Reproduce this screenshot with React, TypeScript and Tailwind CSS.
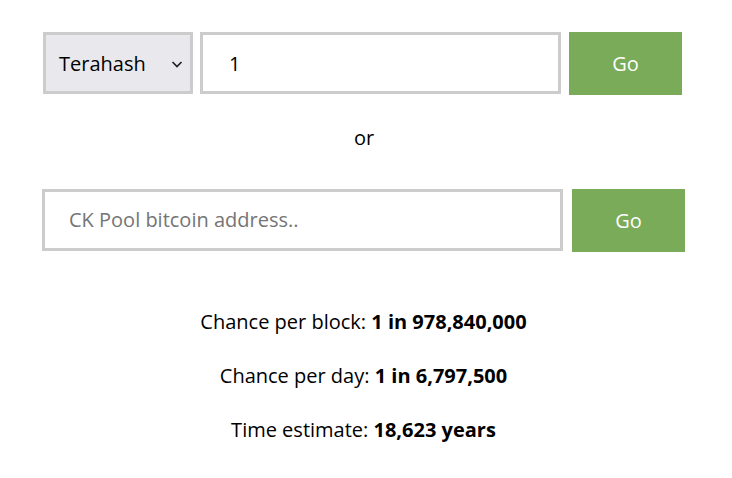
import React from "react";

export default function App() {
  return (
    <div className="w-[732px] h-[478px] bg-white text-black font-['Open_Sans',sans-serif] text-[20px]">
      <div className="flex pt-[32px] pl-[43px]">
        <div className="w-[150px] h-[62px] border-[3px] border-[#cccccc] bg-[#e9e9ed] flex items-center pl-[13px] pr-[6px] pt-[2px] justify-between">
          <span>Terahash</span>
          <svg width="14" height="14" viewBox="0 0 14 14">
            <path d="M2.5 5 L7 9.5 L11.5 5" fill="none" stroke="#222" strokeWidth="1.7" />
          </svg>
        </div>
        <div className="ml-[7px] w-[361px] h-[62px] border-[3px] border-[#cccccc] bg-white flex items-center pl-[26px] pt-[2px]">
          <span>1</span>
        </div>
        <div className="ml-[8px] w-[113px] h-[63px] bg-[#79ab58] text-white flex items-center justify-center">
          Go
        </div>
      </div>
      <div className="text-center mt-[30px] leading-[26px] pr-[4px]">or</div>
      <div className="flex pt-[38px] pl-[42px]">
        <div className="w-[521px] h-[62px] border-[3px] border-[#cccccc] bg-white flex items-center pl-[24px] text-[#757575]">
          CK Pool bitcoin address..
        </div>
        <div className="ml-[9px] w-[113px] h-[63px] bg-[#79ab58] text-white flex items-center justify-center">
          Go
        </div>
      </div>
      <div className="flex flex-col items-center mt-[57px] gap-[28px] leading-[26px] pr-[5px]">
        <div>
          Chance per block: <b className="font-bold">1 in 978,840,000</b>
        </div>
        <div>
          Chance per day: <b className="font-bold">1 in 6,797,500</b>
        </div>
        <div>
          Time estimate: <b className="font-bold">18,623 years</b>
        </div>
      </div>
    </div>
  );
}
